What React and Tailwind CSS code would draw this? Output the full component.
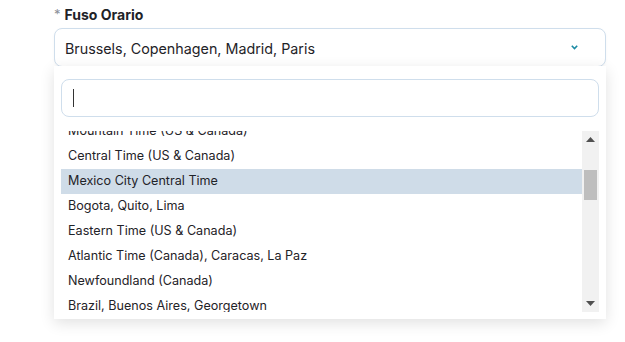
import React from 'react';

const zones = [
  'Mountain Time (US & Canada)',
  'Central Time (US & Canada)',
  'Mexico City Central Time',
  'Bogota, Quito, Lima',
  'Eastern Time (US & Canada)',
  'Atlantic Time (Canada), Caracas, La Paz',
  'Newfoundland (Canada)',
  'Brazil, Buenos Aires, Georgetown',
];

export default function App() {
  return (
    <div className="min-h-[342px] w-[625px] bg-white font-['Inter',sans-serif] text-[#1f2328]">
      <div className="ml-[54px] w-[552px] pt-[4px]">
        {/* Label */}
        <div className="flex h-5 items-center gap-[4px] mb-[4px]">
          <span className="text-[13px] text-[#8a8f98] leading-none">*</span>
          <span className="text-[14px] font-bold text-[#1f2328]">Fuso Orario</span>
        </div>

        {/* Select */}
        <div className="flex h-[39px] items-center justify-between rounded-lg border border-[#cfdeec] bg-white pl-[10px] pr-[27px] pt-[2px] shadow-[0_1px_3px_rgba(0,0,0,0.04)]">
          <span className="text-[14.3px] text-[#1f2328]">Brussels, Copenhagen, Madrid, Paris</span>
          <svg width="7" height="5" viewBox="0 0 7 5" className="-mt-[3px]">
            <path d="M0.8 0.8 L3.5 3.6 L6.2 0.8" fill="none" stroke="#1b8aa3" strokeWidth="1.6" />
          </svg>
        </div>

        {/* Dropdown panel */}
        <div className="-mt-[1px] relative bg-white px-[7px] pt-[13px] pb-[7px] shadow-[0_4px_14px_rgba(0,0,0,0.12)]">
          <div className="flex h-[38px] items-center rounded-lg border border-[#cfdeec] bg-white px-[11px]">
            <span className="h-[18px] w-px bg-[#333]" />
          </div>

          <div className="mt-[14px] flex h-[181px]">
            <div className="flex-1 overflow-hidden">
              <div className="-mt-[12px]">
                {zones.map((z, i) => (
                  <div
                    key={z}
                    className={
                      'flex h-[25px] items-center pl-[7px] text-[12.6px] text-[#1f2328] ' +
                      (i === 2 ? 'bg-[#cfdce8]' : '')
                    }
                  >
                    {z}
                  </div>
                ))}
              </div>
            </div>

            {/* scrollbar */}
            <div className="flex w-[17px] flex-col items-center bg-[#f1f1f1]">
              <div className="flex h-[17px] items-center justify-center">
                <svg width="9" height="5" viewBox="0 0 9 5">
                  <path d="M0 5 L4.5 0 L9 5 Z" fill="#505050" />
                </svg>
              </div>
              <div className="mt-[22px] h-[30px] w-[13px] bg-[#bebebe]" />
              <div className="flex-1" />
              <div className="flex h-[17px] items-center justify-center">
                <svg width="9" height="5" viewBox="0 0 9 5">
                  <path d="M0 0 L9 0 L4.5 5 Z" fill="#505050" />
                </svg>
              </div>
            </div>
          </div>
        </div>
      </div>
    </div>
  );
}
